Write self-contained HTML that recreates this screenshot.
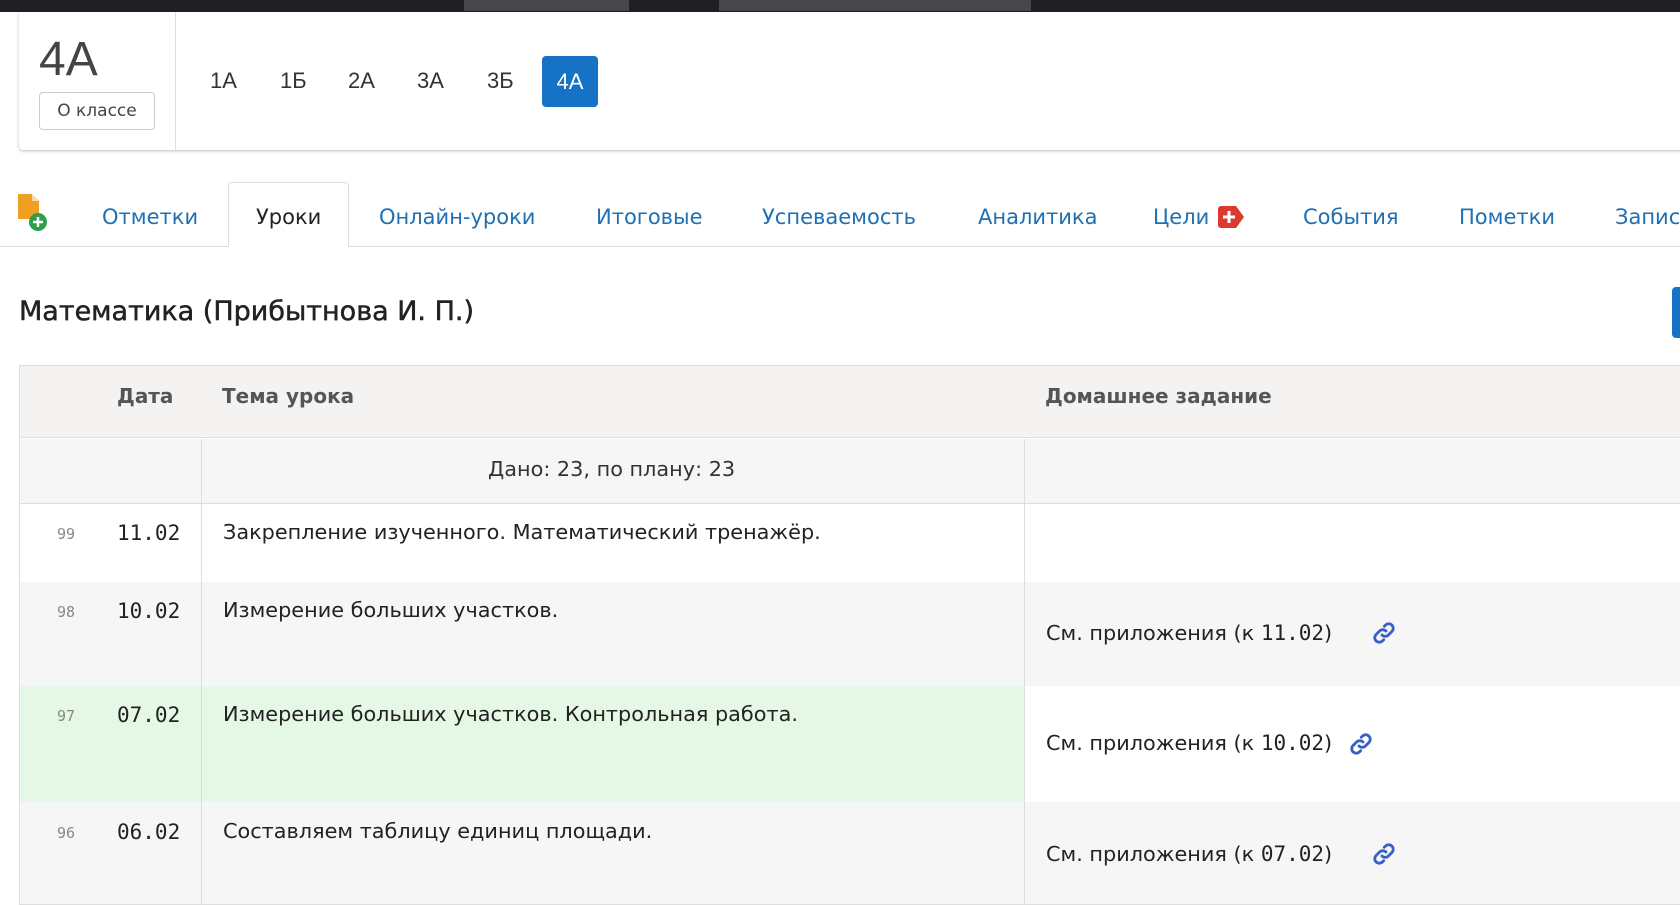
<!DOCTYPE html>
<html><head><meta charset="utf-8"><style>
*{margin:0;padding:0;box-sizing:border-box}
body{width:1680px;height:904px;overflow:hidden;background:#fff;font-family:"DejaVu Sans","Liberation Sans",sans-serif;color:#222;position:relative}
.a{position:absolute;white-space:nowrap}
.tab{position:absolute;top:205px;font-size:21px;color:#1f6fb2}
.cl{position:absolute;top:68px;font-size:22px;color:#333;font-family:"Liberation Sans",sans-serif}
.num{position:absolute;font-size:15px;color:#888;font-family:"DejaVu Sans Mono","Liberation Mono",monospace}
.dt{position:absolute;font-size:21px;color:#222;font-family:"DejaVu Sans Mono","Liberation Mono",monospace}
.tp{position:absolute;font-size:20.8px;color:#222;left:223px}
.hw{position:absolute;font-size:20.8px;color:#222;left:1046px}
.hw span{font-family:"DejaVu Sans Mono","Liberation Mono",monospace;font-size:21px}
.lk{position:absolute;width:24px;height:24px}
</style></head><body>
<div class="a" style="left:0;top:0;width:1680px;height:12px;background:#1f2024"></div>
<div class="a" style="left:464px;top:0;width:165px;height:11px;background:#45474d"></div>
<div class="a" style="left:719px;top:0;width:312px;height:11px;background:#45474d"></div>
<div class="a" style="left:19px;top:12px;width:1670px;height:138px;border-radius:0 0 4px 4px;box-shadow:0 1px 3px rgba(0,0,0,.25);background:#fff"></div>
<div class="a" style="left:175px;top:12px;width:1px;height:138px;background:#ddd"></div>
<div class="a" style="left:39px;top:32px;font-size:48px;color:#444;font-family:'Liberation Sans',sans-serif">4А</div>
<div class="a" style="left:39px;top:92px;width:116px;height:38px;border:1px solid #ccc;border-radius:4px;font-size:17px;color:#444;text-align:center;line-height:36px">О классе</div>
<div class="cl" style="left:210px">1А</div>
<div class="cl" style="left:280px">1Б</div>
<div class="cl" style="left:348px">2А</div>
<div class="cl" style="left:417px">3А</div>
<div class="cl" style="left:487px">3Б</div>
<div class="a" style="left:542px;top:56px;width:56px;height:51px;background:#1572c4;border-radius:4px;color:#fff;font-size:22px;text-align:center;line-height:51px;font-family:'Liberation Sans',sans-serif">4А</div>

<div class="a" style="left:0;top:246px;width:1680px;height:1px;background:#ddd"></div>
<div class="a" style="left:228px;top:182px;width:121px;height:65px;border:1px solid #ddd;border-bottom:none;border-radius:4px 4px 0 0;background:#fff"></div>
<svg class="a" style="left:18px;top:194px" width="32" height="40" viewBox="0 0 32 40"><path d="M0 0h14l7 7v18H0z" fill="#f0a020"/><path d="M14 0v7h7z" fill="#fff" opacity=".6"/><circle cx="20" cy="28" r="9" fill="#2e9e4a"/><path d="M20 23v10M15 28h10" stroke="#fff" stroke-width="2.5"/></svg>
<div class="tab" style="left:102px">Отметки</div>
<div class="tab" style="left:256px;color:#222">Уроки</div>
<div class="tab" style="left:379px">Онлайн-уроки</div>
<div class="tab" style="left:596px">Итоговые</div>
<div class="tab" style="left:762px">Успеваемость</div>
<div class="tab" style="left:978px">Аналитика</div>
<div class="tab" style="left:1153px">Цели</div>
<svg class="a" style="left:1218px;top:206px" width="27" height="22" viewBox="0 0 27 22"><path d="M0 3a3 3 0 0 1 3-3h15l8 11-8 11H3a3 3 0 0 1-3-3z" fill="#dc3a2e"/><path d="M11 5v12M5 11h12" stroke="#fff" stroke-width="3"/></svg>
<div class="tab" style="left:1303px">События</div>
<div class="tab" style="left:1459px">Пометки</div>
<div class="tab" style="left:1615px">Записи</div>

<div class="a" style="left:19px;top:296px;font-size:27px;color:#222;font-weight:500;-webkit-text-stroke:0.5px #222">Математика (Прибытнова И. П.)</div>
<div class="a" style="left:1672px;top:287px;width:20px;height:51px;background:#1572c4;border-radius:4px"></div>

<div class="a" style="left:19px;top:365px;width:1670px;height:540px;border:1px solid #ddd;border-right:none"></div>
<div class="a" style="left:20px;top:366px;width:1660px;height:72px;background:#f4f3f2;border-bottom:1px solid #ddd"></div>
<div class="a" style="left:117px;top:384px;font-size:20px;font-weight:bold;color:#555">Дата</div>
<div class="a" style="left:222px;top:384px;font-size:20px;font-weight:bold;color:#555">Тема урока</div>
<div class="a" style="left:1045px;top:384px;font-size:20px;font-weight:bold;color:#555">Домашнее задание</div>

<div class="a" style="left:20px;top:439px;width:1660px;height:65px;background:#f6f6f6;border-bottom:1px solid #ddd"></div>
<div class="a" style="left:488px;top:457px;font-size:20.8px;color:#333">Дано: 23, по плану: 23</div>

<div class="a" style="left:20px;top:582px;width:1660px;height:104px;background:#f6f6f6"></div>
<div class="a" style="left:20px;top:686px;width:1005px;height:116px;background:#e5f8e5"></div>
<div class="a" style="left:20px;top:802px;width:1660px;height:102px;background:#f6f6f6"></div>

<div class="a" style="left:201px;top:439px;width:1px;height:465px;background:#ddd"></div>
<div class="a" style="left:1024px;top:439px;width:1px;height:465px;background:#ddd"></div>

<div class="num" style="left:57px;top:525px">99</div><div class="dt" style="left:117px;top:521px">11.02</div>
<div class="tp" style="top:520px">Закрепление изученного. Математический тренажёр.</div>

<div class="num" style="left:57px;top:603px">98</div><div class="dt" style="left:117px;top:599px">10.02</div>
<div class="tp" style="top:598px">Измерение больших участков.</div>
<div class="hw" style="top:621px">См. приложения (к <span>11.02</span>)</div>

<div class="num" style="left:57px;top:707px">97</div><div class="dt" style="left:117px;top:703px">07.02</div>
<div class="tp" style="top:702px">Измерение больших участков. Контрольная работа.</div>
<div class="hw" style="top:731px">См. приложения (к <span>10.02</span>)</div>

<div class="num" style="left:57px;top:824px">96</div><div class="dt" style="left:117px;top:820px">06.02</div>
<div class="tp" style="top:819px">Составляем таблицу единиц площади.</div>
<div class="hw" style="top:842px">См. приложения (к <span>07.02</span>)</div>

<svg class="lk" style="left:1372px;top:621px" viewBox="0 0 24 24" fill="none" stroke="#3a5fc8" stroke-width="2.8" stroke-linecap="round"><path d="M10 14a4.5 4.5 0 0 0 6.4 0l3.5-3.5a4.5 4.5 0 0 0-6.4-6.4l-1.2 1.2"/><path d="M14 10a4.5 4.5 0 0 0-6.4 0l-3.5 3.5a4.5 4.5 0 0 0 6.4 6.4l1.2-1.2"/></svg>
<svg class="lk" style="left:1349px;top:732px" viewBox="0 0 24 24" fill="none" stroke="#3a5fc8" stroke-width="2.8" stroke-linecap="round"><path d="M10 14a4.5 4.5 0 0 0 6.4 0l3.5-3.5a4.5 4.5 0 0 0-6.4-6.4l-1.2 1.2"/><path d="M14 10a4.5 4.5 0 0 0-6.4 0l-3.5 3.5a4.5 4.5 0 0 0 6.4 6.4l1.2-1.2"/></svg>
<svg class="lk" style="left:1372px;top:842px" viewBox="0 0 24 24" fill="none" stroke="#3a5fc8" stroke-width="2.8" stroke-linecap="round"><path d="M10 14a4.5 4.5 0 0 0 6.4 0l3.5-3.5a4.5 4.5 0 0 0-6.4-6.4l-1.2 1.2"/><path d="M14 10a4.5 4.5 0 0 0-6.4 0l-3.5 3.5a4.5 4.5 0 0 0 6.4 6.4l1.2-1.2"/></svg>
</body></html>
